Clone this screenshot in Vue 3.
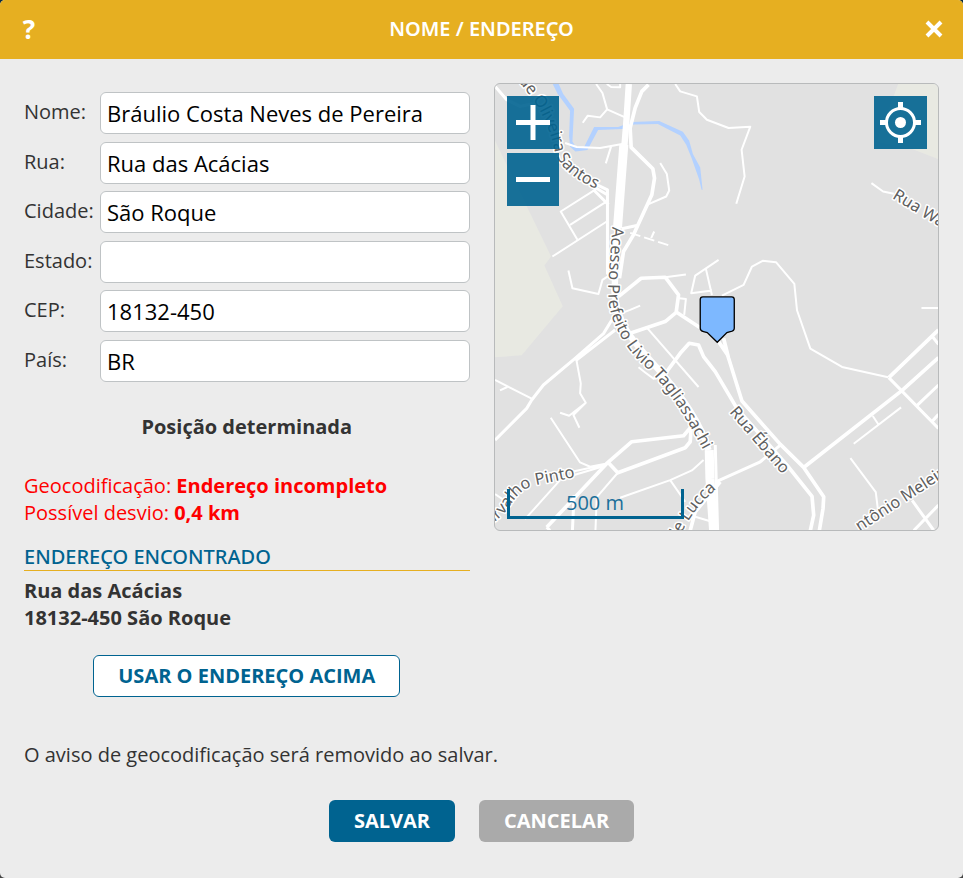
<script setup>
import { reactive } from 'vue'

const fields = reactive([
  { id: 'nome', label: 'Nome:', value: 'Bráulio Costa Neves de Pereira' },
  { id: 'rua', label: 'Rua:', value: 'Rua das Acácias' },
  { id: 'cidade', label: 'Cidade:', value: 'São Roque' },
  { id: 'estado', label: 'Estado:', value: '' },
  { id: 'cep', label: 'CEP:', value: '18132-450' },
  { id: 'pais', label: 'País:', value: 'BR' }
])

const minorRoads = [
  'M318 18L337 45L351 94L405 118M351 94L330 118L293 113L278 134',
  'M350 18L363 27L390 28V18',
  'M225 195L260 207L330 210L400 197M363 205L347 256',
  'M510 255L530 288L537 337L528 355L470 380',
  'M318 333L212 400L262 485M240 440L350 370M187 535L350 430',
  'M235 577L247 630L325 647L337 605L360 590',
  'M525 597L587 589M567 660L587 662L582 710',
  'M685 545L615 592L603 645L665 637M647 572L665 650',
  'M555 18L570 40L620 55L627 102L650 125L715 150L780 146L754 215L763 295L738 377',
  'M695 652L760 620L785 565L817 548L857 552L912 617L920 696L960 811L1055 866L1193 897',
  'M1143 315L1178 340L1210 347M1293 689H1344',
  'M450 682L420 695L380 710M470 748L625 926M445 867L467 884L490 901L520 893L570 825',
  'M258 840L272 915L270 945L287 973L237 1012L210 1003M287 973L250 1010L268 1048',
  'M15 905L128 962M30 936L52 926M182 1018L270 1152L300 1165L350 1155',
  'M245 1180L340 1160M245 1192L345 1162M105 1322L210 1205M15 1247L50 1270',
  'M383 1183L320 1256L316 1356M640 1145L605 1176L540 1205L390 1258M540 1205L585 1270',
  'M1090 1096L1232 987M1147 1013L1163 1037M1080 1139L1156 1241L1162 1290',
  'M483 480L492 460M615 1315L665 1330'
]

const mediumRoads = [
  'M15 25L50 65L90 85L140 75',
  'M300 310L352 335V585L362 600M310 335L355 380M310 325L355 352M395 452L440 442',
  'M365 725L340 766L255 840L160 920L125 965L110 990L15 1085M375 755L257 847',
  'M170 1346L180 1356M252 1250L247 1356M675 1100L682 1356',
  'M675 1211L810 1150L870 1100M1195 898L1344 1050',
  'M1325 774L1344 798M1280 981L1344 920M1325 1029L1344 1008',
  'M1265 1266L1330 1356M1270 1356L1344 1280'
]

const largerRoads = [
  'M475 20L455 40L435 90L420 150L423 208L488 272L493 300L485 350L430 470L400 520L388 600',
  'M385 655L453 600L525 597L565 650L558 701L640 755M420 765L525 730L560 701',
  'M520 893L570 825L597 795L625 800L640 835L675 880L740 990L890 1160L965 1254L970 1310L960 1356',
  'M685 790L712 830L755 968L870 1098L940 1167L1000 1255L998 1290L987 1356M700 780L715 840',
  'M170 1346L350 1155L425 1090L580 1072L603 1045L600 1090L585 1108L383 1183L355 1153',
  'M600 1356L615 1300L690 1210M940 1167L1235 936L1344 838M1195 898L1344 755'
]

const streetNames = [
  { id: 'street-oliveira', d: 'M84 8C108 36 128 62 142 85S180 160 190 200C200 262 240 300 345 344', name: 'de Oliveira Santos' },
  { id: 'street-acesso', d: 'M366 446C362 540 350 620 356 675C366 745 408 805 443 845C535 925 590 1020 660 1155', name: 'Acesso Prefeito Livio Tagliassachi' },
  { id: 'street-wa', d: 'M1204 360L1380 465', name: 'Rua Walter' },
  { id: 'street-ebano', d: 'M716 1002L895 1210', name: 'Rua Ébano' },
  { id: 'street-pinto', d: 'M0 1338C72 1300 60 1240 140 1219L285 1190', name: 'arvalho Pinto' },
  { id: 'street-lucca', d: 'M560 1391C592 1325 620 1278 705 1208', name: 'de Lucca' },
  { id: 'street-meleiro', d: 'M1108 1360L1390 1177', name: 'ntônio Meleiro' }
]
</script>

<template>
  <main class="dialog">
    <header class="titlebar">
      <button class="bar-button help" type="button" aria-label="Ajuda">?</button>
      <h1>NOME / ENDEREÇO</h1>
      <button class="bar-button" type="button" aria-label="Fechar">
        <svg class="close-icon" viewBox="0 0 18 18" aria-hidden="true"><path d="M2 2L16 16M16 2L2 16" /></svg>
      </button>
    </header>

    <form class="content" @submit.prevent>
      <div class="columns">
        <section class="details">
          <div class="fields">
            <div v-for="field in fields" :key="field.id" class="field">
              <label :for="field.id">{{ field.label }}</label>
              <input :id="field.id" v-model="field.value" type="text">
            </div>
          </div>
          <p class="status">Posição determinada</p>
          <p class="warning">
            Geocodificação: <strong>Endereço incompleto</strong><br>
            Possível desvio: <strong>0,4 km</strong>
          </p>
          <h2>ENDEREÇO ENCONTRADO</h2>
          <p class="found">Rua das Acácias<br>18132-450 São Roque</p>
          <button class="button outline" type="button">USAR O ENDEREÇO ACIMA</button>
        </section>

        <section class="map">
          <svg class="tiles" viewBox="15 18 1329 1335" preserveAspectRatio="xMidYMid slice" aria-hidden="true">
            <path class="land" d="M15 188L183 535L163 562L218 684L95 831L15 837ZM1223 18L1160 190L1265 213L1344 243V18Z" />
            <path class="water" d="M188 18H206L219 47L252 92L247 190L258 208L282 207L312 147L384 147L425 132L507 129L578 161L597 188L608 228L630 268L637 335H634L627 305L604 240L588 200L570 172L503 138L430 139L398 153L324 156L292 216L256 220L240 206L237 174L240 98L203 48Z" />
            <g class="roads">
              <path v-for="d in minorRoads" :key="d" class="minor" :d="d" />
              <path class="minor dashed" d="M420 464L541 503" />
              <path v-for="d in mediumRoads" :key="d" class="medium" :d="d" />
              <path v-for="d in largerRoads" :key="d" class="larger" :d="d" />
              <path class="main-road" d="M416 18L408 140L382 450L373 640C380 740 430 790 500 868S630 1030 655 1115" />
              <path class="main-road wide" d="M401 200L382 450M657 1115L659 1200L670 1356" />
            </g>
            <g v-for="street in streetNames" :key="street.id">
              <path :id="street.id" :d="street.d" fill="none" />
              <text class="street"><textPath :href="'#' + street.id">{{ street.name }}</textPath></text>
            </g>
            <path class="pin" d="M638 656H724Q732 656 732 664V750Q732 759 720 760L710 763L681 792L651 763L640 760Q630 758 630 750V664Q630 656 638 656Z" />
          </svg>
          <div class="zoom-controls">
            <button class="map-button" type="button" aria-label="Aproximar">
              <svg viewBox="0 0 52 53" aria-hidden="true"><path d="M9 26.5H43M26 9V44" /></svg>
            </button>
            <button class="map-button" type="button" aria-label="Afastar">
              <svg viewBox="0 0 52 53" aria-hidden="true"><path d="M9 26.5H43" /></svg>
            </button>
          </div>
          <button class="map-button locate" type="button" aria-label="Centralizar">
            <svg viewBox="0 0 53 53" aria-hidden="true">
              <circle class="ring" cx="26.5" cy="26.5" r="14" />
              <circle class="dot" cx="26.5" cy="26.5" r="5.5" />
              <path d="M6 26.5H13M40 26.5H47M26.5 6V13M26.5 40V47" />
            </svg>
          </button>
          <div class="scale">500 m</div>
        </section>
      </div>

      <p class="notice">O aviso de geocodificação será removido ao salvar.</p>
      <div class="actions">
        <button class="button primary" type="submit">SALVAR</button>
        <button class="button muted" type="button">CANCELAR</button>
      </div>
    </form>
  </main>
</template>

<style>
html {
  background: linear-gradient(#0b2a3d, #444);
}
body {
  margin: 0;
}
</style>

<style scoped>
* {
  box-sizing: border-box;
}
.dialog {
  min-height: 100vh;
  overflow: hidden;
  border-radius: 5px;
  background: #ececec;
  color: #333;
  font: 20px/27px "Open Sans", "Noto Sans", sans-serif;
}
p, h1, h2 {
  margin: 0;
}
button {
  margin: 0;
  border: 0;
  font-family: inherit;
  cursor: pointer;
}
.titlebar {
  display: flex;
  align-items: center;
  justify-content: space-between;
  height: 59px;
  padding: 0 17px 2px;
  background: #e6af21;
  color: #fff;
}
.titlebar h1 {
  font-family: "Noto Sans", "Open Sans", sans-serif;
  font-size: 20px;
  font-weight: 600;
}
.bar-button {
  display: flex;
  align-items: center;
  justify-content: center;
  width: 24px;
  height: 36px;
  padding: 0;
  background: none;
  color: #fff;
}
.help {
  font-size: 26px;
  font-weight: 700;
}
.close-icon {
  width: 18px;
  height: 18px;
  fill: none;
  stroke: #fff;
  stroke-width: 4;
}
.content {
  padding: 24px;
}
.columns {
  display: grid;
  grid-template-columns: 1fr 1fr;
  align-items: start;
  gap: 24px;
}
.details {
  padding-top: 9px;
}
.fields {
  display: flex;
  flex-direction: column;
  justify-content: space-between;
  min-height: 290px;
}
.field {
  display: grid;
  grid-template-columns: 76px 1fr;
}
.field label {
  padding-top: 6px;
}
.field input {
  width: 100%;
  height: 42px;
  padding: 0 6px;
  border: 1px solid #bfc3c5;
  border-radius: 6px;
  background: #fff;
  color: #000;
  font: 22px "Open Sans", "Noto Sans", sans-serif;
}
.status {
  margin-top: 31px;
  font-weight: 700;
  text-align: center;
}
.warning {
  margin-top: 32px;
  color: #f00;
}
h2 {
  margin-top: 17px;
  border-bottom: 1px solid #e6af21;
  color: #006390;
  font-family: "Noto Sans", "Open Sans", sans-serif;
  font-size: 20px;
  font-weight: 500;
  line-height: 27px;
}
.found {
  margin-top: 6px;
  font-weight: 700;
}
.button {
  height: 42px;
  padding: 0 25px 2px;
  border-radius: 6px;
  color: #fff;
  font-size: 20px;
  font-weight: 700;
}
.outline {
  display: block;
  margin: 24px auto 0;
  padding: 0 24px 2px;
  border: 1px solid #006390;
  background: #fff;
  color: #006390;
}
.primary {
  background: #006390;
}
.muted {
  background: #aaa;
}
.notice {
  margin-top: 44px;
}
.actions {
  display: flex;
  justify-content: center;
  gap: 24px;
  margin-top: 32px;
}
.map {
  position: relative;
  overflow: hidden;
  border: 1px solid #b8babb;
  border-radius: 6px;
  background: #e1e1e1;
}
.tiles {
  display: block;
  width: 100%;
}
.land {
  fill: #e8e9e2;
}
.water {
  fill: #b3d1ff;
}
.roads {
  fill: none;
  stroke: #fff;
  stroke-linejoin: round;
}
.minor {
  stroke-width: 6;
}
.dashed {
  stroke-dasharray: 32 12;
}
.medium {
  stroke-width: 9;
}
.larger {
  stroke-width: 11;
}
.main-road {
  stroke-width: 19;
}
.wide {
  stroke-width: 27;
}
.street {
  fill: #606060;
  stroke: #fff;
  stroke-width: 9;
  stroke-linejoin: round;
  paint-order: stroke;
  font-family: "Noto Sans", "Open Sans", sans-serif;
  font-size: 49px;
}
.pin {
  fill: #7db8ff;
  stroke: #000;
  stroke-width: 4;
}
.zoom-controls {
  position: absolute;
  top: 12px;
  left: 12px;
  display: grid;
  gap: 4px;
}
.map-button {
  width: 52px;
  height: 53px;
  padding: 0;
  background: rgba(0, 99, 144, 0.9);
}
.map-button svg {
  display: block;
  fill: none;
  stroke: #fff;
  stroke-width: 5;
}
.map-button .ring {
  stroke-width: 3;
}
.map-button .dot {
  fill: #fff;
  stroke: none;
}
.locate {
  position: absolute;
  top: 12px;
  right: 11px;
  width: 53px;
}
.scale {
  position: absolute;
  bottom: 11px;
  left: 12px;
  width: 177px;
  height: 30px;
  border: 3px solid #006390;
  border-top: 0;
  color: #1a6f9a;
  text-align: center;
}
</style>
